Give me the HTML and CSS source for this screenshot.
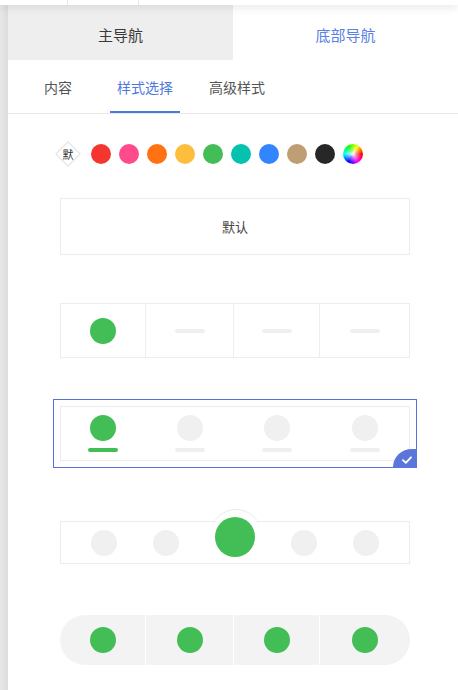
FILE: index.html
```html
<!DOCTYPE html>
<html>
<head>
<meta charset="utf-8">
<link rel="stylesheet" href="styles.css">
</head>
<body>
<div class="topbar">
  <span class="tick t1"></span>
  <span class="tick t2"></span>
</div>
<div class="main">
  <div class="side"></div>
  <div class="panel">
    <div class="nav-tabs">
      <div class="nav-tab">主导航</div>
      <div class="nav-tab active">底部导航</div>
    </div>
    <div class="sub-tabs">
      <div class="sub-tab">内容</div>
      <div class="sub-tab active">样式选择</div>
      <div class="sub-tab">高级样式</div>
    </div>
    <div class="colors">
      <div class="diamond"><span class="diamond-box"></span><span class="diamond-txt">默</span></div>
      <span class="dot" style="background:#f43530"></span>
      <span class="dot" style="background:#ff4b8b"></span>
      <span class="dot" style="background:#ff7214"></span>
      <span class="dot" style="background:#fdbd3d"></span>
      <span class="dot" style="background:#43be57"></span>
      <span class="dot" style="background:#05c2b0"></span>
      <span class="dot" style="background:#3384ff"></span>
      <span class="dot" style="background:#be9e72"></span>
      <span class="dot" style="background:#272727"></span>
      <span class="dot rainbow"></span>
    </div>
    <div class="options">
      <div class="option opt1">
        <div class="box box-default">默认</div>
      </div>
      <div class="option opt2">
        <div class="box box-cells">
          <div class="cell c1"><span class="circle green"></span></div>
          <div class="cell c2"><span class="bar"></span></div>
          <div class="cell c3"><span class="bar"></span></div>
          <div class="cell c4"><span class="bar"></span></div>
        </div>
      </div>
      <div class="option opt3 selected">
        <div class="box box-stack">
          <div class="scell c1"><span class="circle green"></span><span class="bar greenbar"></span></div>
          <div class="scell c2"><span class="circle"></span><span class="bar"></span></div>
          <div class="scell c3"><span class="circle"></span><span class="bar"></span></div>
          <div class="scell c4"><span class="circle"></span><span class="bar"></span></div>
        </div>
        <div class="badge">
          <svg width="10" height="8" viewBox="0 0 10 8"><path d="M1 4.2 L3.8 6.8 L9 1.3" fill="none" stroke="#fff" stroke-width="1.8" stroke-linecap="round" stroke-linejoin="round"/></svg>
        </div>
      </div>
      <div class="option opt4">
        <div class="box box-bump">
          <div class="bump-clip"><span class="bump"></span></div>
          <span class="circle"></span>
          <span class="circle"></span>
          <span class="circle big green"></span>
          <span class="circle"></span>
          <span class="circle"></span>
        </div>
      </div>
      <div class="option opt5">
        <div class="box box-pill">
          <div class="pcell c1"><span class="circle green"></span></div>
          <div class="pcell c2"><span class="circle green"></span></div>
          <div class="pcell c3"><span class="circle green"></span></div>
          <div class="pcell c4"><span class="circle green"></span></div>
        </div>
      </div>
    </div>
  </div>
</div>
</body>
</html>
```
FILE: styles.css
```css
* { box-sizing: border-box; }
html, body { margin: 0; padding: 0; }
body {
  width: 458px;
  height: 690px;
  overflow: hidden;
  background: #fff;
  font-family: "Noto Sans CJK SC", "Noto Sans", sans-serif;
  color: #333;
}
.topbar {
  position: relative;
  z-index: 2;
  height: 5px;
  background: #fff;
  box-shadow: 0 2px 8px rgba(0,0,0,0.13);
}
.tick {
  position: absolute;
  top: 0;
  width: 1px;
  height: 5px;
  background: #e6e6e6;
}
.t1 { left: 67px; }
.t2 { left: 138px; }
.main {
  display: flex;
  height: 685px;
}
.side {
  width: 8px;
  flex: none;
  background: linear-gradient(to right, #e8e8e8, #dcdcdc);
}
.panel {
  flex: 1;
  display: flex;
  flex-direction: column;
}
.nav-tabs {
  display: flex;
  height: 55px;
}
.nav-tab {
  flex: 1;
  display: flex;
  align-items: center;
  justify-content: center;
  font-size: 15px;
  color: #3a3a3a;
  background: #eeeeee;
  padding-top: 3px;
}
.nav-tab.active {
  background: #fff;
  color: #5b80e3;
}
.sub-tabs {
  display: flex;
  gap: 17px;
  height: 54px;
  padding-left: 15px;
  border-bottom: 1px solid #e8e8e8;
}
.sub-tab {
  width: 70px;
  display: flex;
  align-items: center;
  justify-content: center;
  font-size: 14px;
  color: #555;
  border-bottom: 2px solid transparent;
  padding-top: 2px;
}
.sub-tab.active {
  color: #4f78de;
  border-bottom-color: #4f78de;
}
.sub-tab:last-child { margin-left: 5px; }
.colors {
  display: flex;
  align-items: center;
  gap: 8px;
  margin-top: 29px;
  padding-left: 47px;
  height: 22px;
}
.diamond {
  position: relative;
  width: 26px;
  height: 26px;
  margin-right: 2px;
  display: flex;
  align-items: center;
  justify-content: center;
}
.diamond-box {
  position: absolute;
  left: 4px;
  top: 4px;
  width: 18px;
  height: 18px;
  border: 1px solid #e2e2e2;
  background: #fff;
  transform: rotate(45deg);
  box-shadow: 0 0 2px rgba(0,0,0,0.06);
}
.diamond-txt {
  position: relative;
  font-size: 11px;
  color: #333;
  line-height: 1;
}
.dot {
  width: 20px;
  height: 20px;
  border-radius: 50%;
  flex: none;
}
.rainbow {
  background: conic-gradient(from 90deg, #ff0000, #ff00ff, #0000ff, #00ffff, #00ff00, #ffff00, #ff0000);
  position: relative;
}
.rainbow::after {
  content: "";
  position: absolute;
  inset: 0;
  border-radius: 50%;
  background: radial-gradient(circle, #fff 0%, rgba(255,255,255,0.5) 25%, rgba(255,255,255,0) 60%);
}
.options {
  display: flex;
  flex-direction: column;
  padding-left: 45px;
}
.option {
  position: relative;
  width: 364px;
  padding: 6px;
  border: 1px solid transparent;
}
.option.selected { border-color: #5672d8; }
.opt1 { margin-top: 26px; }
.opt2 { margin-top: 34px; }
.opt3 { margin-top: 34px; }
.opt4 { margin-top: 46px; }
.opt5 { margin-top: 37px; }
.box {
  width: 350px;
  border: 1px solid #ececec;
  background: #fff;
}
.box-default {
  height: 57px;
  display: flex;
  align-items: center;
  justify-content: center;
  font-size: 13px;
  color: #444;
}
.box-cells {
  height: 55px;
  display: flex;
}
.c1 { flex: 0 0 84px; }
.c2 { flex: 0 0 88px; }
.c3 { flex: 0 0 86px; }
.c4 { flex: 1 1 auto; }
.cell {
  display: flex;
  align-items: center;
  justify-content: center;
  border-left: 1px solid #eeeeee;
}
.cell:first-child { border-left: none; }
.circle {
  width: 26px;
  height: 26px;
  border-radius: 50%;
  background: #f0f0f0;
  flex: none;
}
.circle.green { background: #43be57; }
.bar {
  width: 30px;
  height: 4px;
  border-radius: 2px;
  background: #efefef;
}
.bar.greenbar { background: #43be57; }
.box-stack {
  height: 55px;
  display: flex;
}
.scell {
  display: flex;
  flex-direction: column;
  align-items: center;
  padding-top: 8px;
  gap: 7px;
}
.scell.c2, .scell.c3, .scell.c4 { padding-left: 1px; }
.badge {
  position: absolute;
  right: -1px;
  bottom: -1px;
  width: 24px;
  height: 19px;
  background: #5b75db;
  border-top-left-radius: 19px 18px;
  display: flex;
  align-items: center;
  justify-content: flex-end;
  padding-right: 5px;
  padding-top: 2px;
}
.badge svg { display: block; }
.box-bump {
  position: relative;
  height: 43px;
  display: flex;
  align-items: center;
  justify-content: space-between;
  padding: 0 30px;
}
.bump-clip {
  position: absolute;
  left: 148px;
  top: -13px;
  width: 54px;
  height: 14px;
  overflow: hidden;
}
.bump {
  display: block;
  width: 52px;
  height: 52px;
  margin-left: 1px;
  border-radius: 50%;
  background: #fff;
  border: 1px solid #eaeaea;
}
.circle.big {
  position: relative;
  width: 40px;
  height: 40px;
  margin-bottom: 12px;
}
.box-pill {
  height: 50px;
  border: none;
  border-radius: 25px;
  background: #f3f3f3;
  display: flex;
  overflow: hidden;
}
.pcell {
  display: flex;
  align-items: center;
  justify-content: center;
  border-left: 1px solid #fff;
}
.pcell.c1 { flex-basis: 85px; }
.pcell:first-child { border-left: none; }
```
